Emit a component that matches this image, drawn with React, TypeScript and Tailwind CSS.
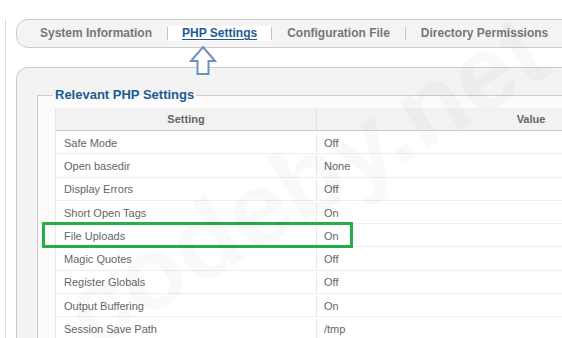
import React from 'react';

/* ───────────── data ───────────── */

const TABS = ['System Information', 'PHP Settings', 'Configuration File', 'Directory Permissions'];
const ACTIVE = 'PHP Settings';

const SETTINGS: [string, string][] = [
  ['Safe Mode', 'Off'],
  ['Open basedir', 'None'],
  ['Display Errors', 'Off'],
  ['Short Open Tags', 'On'],
  ['File Uploads', 'On'],
  ['Magic Quotes', 'Off'],
  ['Register Globals', 'Off'],
  ['Output Buffering', 'On'],
  ['Session Save Path', '/tmp'],
];

/* ───────────── pieces ───────────── */

function TabBar() {
  return (
    <div className="mt-[19px] h-[29px] flex items-center border border-[#cccccc] rounded-l-[12px] bg-[#f4f4f4] pl-[8px]">
      {TABS.map((t, i) => (
        <React.Fragment key={t}>
          <span
            className={
              t === ACTIVE
                ? 'h-[15px] leading-[15px] px-[14px] bg-white text-[#1d5a93] underline underline-offset-2'
                : 'h-[15px] leading-[15px] px-[15px] text-[#777777]'
            }
          >
            {t}
          </span>
          {i < TABS.length ? <span className="w-px h-[13px] bg-[#c4c4c4]" /> : null}
        </React.Fragment>
      ))}
    </div>
  );
}

function SettingsTable() {
  return (
    <div className="ml-[2px] w-[690px] bg-white border-l border-[#e6e6e6] text-[11px]">
      <div className="flex h-[23px] bg-[#f2f2f2] border-b border-[#cfcfcf] font-bold text-[#666666]">
        <div className="w-[260px] flex items-center justify-center">Setting</div>
        <div className="flex-1 flex items-center justify-center border-l border-[#e4e4e4]">Value</div>
      </div>
      {SETTINGS.map(([name, value]) => (
        <div key={name} className="flex h-[23.25px] pt-[2px] border-b border-[#eeeeee] text-[#666666]">
          <div className="w-[260px] pl-[8px] flex items-center">{name}</div>
          <div className="flex-1 pl-[7px] flex items-center border-l border-[#e8e8e8]">{value}</div>
        </div>
      ))}
    </div>
  );
}

function UpArrow() {
  return (
    <svg
      className="absolute left-[189px] top-[45px]"
      width="28"
      height="31"
      viewBox="0 0 28 31"
      fill="none"
    >
      <path
        d="M14 2 L26 16 L19.5 16 L19.5 29 L8.5 29 L8.5 16 L2 16 Z"
        stroke="#6f8fbd"
        strokeWidth="2"
        strokeLinejoin="miter"
        fill="#ffffff"
      />
    </svg>
  );
}

/* ───────────── page ───────────── */

export default function App() {
  return (
    <div className="relative w-[562px] h-[338px] overflow-hidden bg-white font-['Liberation_Sans',Arial,sans-serif]">
      <div className="ml-[5px] w-[900px] h-full border-l border-[#dddddd] pl-[10px] text-[12px] font-bold">
        <TabBar />

        <div className="mt-[19px] h-[400px] border-t border-l border-[#cccccc] rounded-tl-[12px] bg-[#f3f3f3] pt-[19px] pl-[20px]">
          <fieldset className="m-0 border border-[#cccccc] bg-[#fbfbfb] pl-[15px] pt-[5px] pr-0 pb-0 h-[300px] font-normal">
            <legend className="px-[2px] text-[13px] leading-[16px] font-bold text-[#1e5b94]">
              Relevant PHP Settings
            </legend>
            <SettingsTable />
          </fieldset>
        </div>
      </div>

      <UpArrow />

      {/* annotation box */}
      <div className="absolute left-[42px] top-[222px] w-[311px] h-[26px] border-[3px] border-[#25ad49]" />

      {/* watermark */}
      <div className="pointer-events-none absolute left-[305px] top-[180px] -translate-x-1/2 -translate-y-1/2 -rotate-[31deg] whitespace-nowrap text-[104px] font-bold leading-none text-black/[0.025] font-['Liberation_Sans',Arial,sans-serif]">
        codeby.net
      </div>
    </div>
  );
}
